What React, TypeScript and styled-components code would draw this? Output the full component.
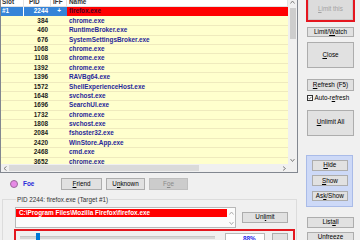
import React from "react";
import styled, { createGlobalStyle } from "styled-components";

const FONT = `"Liberation Sans", Arial, sans-serif`;

const GlobalStyle = createGlobalStyle`
  html, body {
    margin: 0;
    padding: 0;
    background: #f0f0f0;
  }
  body {
    width: 360px;
    height: 240px;
    overflow: hidden;
    font-family: ${FONT};
  }
`;

const Window = styled.div`
  display: flex;
  width: 360px;
  height: 243px;
  margin-top: -3px;
  overflow: hidden;
  background: #f0f0f0;
  font-family: ${FONT};
  color: #000;
`;

const LeftSide = styled.div`
  display: flex;
  flex-direction: column;
  width: 298px;
  flex: none;
`;

/* ---------- process list ---------- */

const ListFrame = styled.div`
  display: flex;
  flex-direction: column;
  height: 176px;
  flex: none;
  box-sizing: border-box;
  border: 1px solid #828790;
  background: #fff;
`;

const ListBody = styled.div`
  display: flex;
  flex: 1;
  min-height: 0;
`;

const Grid = styled.div`
  flex: 1;
  min-width: 0;
  overflow: hidden;
  background: #ffffcd;
`;

const HeaderRow = styled.div`
  display: flex;
  height: 9.4px;
  box-sizing: border-box;
  background: #fff;
  border-bottom: 1px solid #e3e3e3;
  font: bold 6.4px/8.4px ${FONT};
  color: #333;
`;

const HeaderCell = styled.div<{ $w?: number; $pad?: number }>`
  ${(p) => (p.$w ? `width: ${p.$w}px; flex: none;` : "flex: 1;")}
  box-sizing: border-box;
  padding-left: ${(p) => p.$pad ?? 1}px;
  border-right: 1px solid #e3e3e3;
  white-space: nowrap;
`;

const Row = styled.div<{ $sel?: boolean }>`
  display: flex;
  height: 9.4px;
  box-sizing: border-box;
  border-bottom: 1px solid ${(p) => (p.$sel ? "transparent" : "#efeabd")};
  font: bold 6.4px/8.4px ${FONT};
  white-space: nowrap;
`;

const SlotCell = styled.div<{ $sel?: boolean }>`
  width: 23px;
  flex: none;
  box-sizing: border-box;
  padding-left: 1px;
  background: ${(p) => (p.$sel ? "#3584d8" : "transparent")};
  border-right: 1.5px solid ${(p) => (p.$sel ? "#fff" : "transparent")};
  color: ${(p) => (p.$sel ? "#fff" : "#222")};
`;

const PidCell = styled.div<{ $sel?: boolean }>`
  width: 27px;
  flex: none;
  box-sizing: border-box;
  padding-right: 3px;
  text-align: right;
  background: ${(p) => (p.$sel ? "#3584d8" : "transparent")};
  color: ${(p) => (p.$sel ? "#fff" : "#1c1c1c")};
`;

const IffCell = styled.div<{ $sel?: boolean }>`
  width: 16px;
  flex: none;
  text-align: center;
  background: ${(p) => (p.$sel ? "#3584d8" : "transparent")};
  color: ${(p) => (p.$sel ? "#fff" : "#222")};
`;

const NameCell = styled.div<{ $sel?: boolean }>`
  flex: 1;
  padding-left: 2px;
  overflow: hidden;
  background: ${(p) => (p.$sel ? "#ff0000" : "transparent")};
  color: ${(p) => (p.$sel ? "#4a0024" : "#27279a")};
`;

const VScroll = styled.div`
  display: flex;
  flex-direction: column;
  width: 9px;
  flex: none;
  background: #f0f0f0;
`;

const ArrowBox = styled.div<{ $w: number; $h: number }>`
  display: flex;
  align-items: center;
  justify-content: center;
  width: ${(p) => p.$w}px;
  height: ${(p) => p.$h}px;
  flex: none;
`;

const VTrack = styled.div`
  flex: 1;
  display: flex;
  flex-direction: column;
  align-items: center;
  padding-top: 1px;
`;

const VThumb = styled.div`
  width: 6px;
  height: 31px;
  background: #cdcdcd;
`;

const HScroll = styled.div`
  display: flex;
  height: 8px;
  flex: none;
  background: #f0f0f0;
`;

const HTrack = styled.div`
  flex: 1;
  display: flex;
  align-items: center;
`;

const HThumb = styled.div`
  width: 190px;
  height: 6px;
  background: #dadada;
`;

const Corner = styled.div`
  width: 9px;
  flex: none;
  background: #f0f0f0;
`;

type Dir = "up" | "down" | "left" | "right";

const chevronPts: Record<Dir, string> = {
  up: "0.5,3.5 2.5,1 4.5,3.5",
  down: "0.5,1 2.5,3.5 4.5,1",
  left: "3.5,0.5 1,2.5 3.5,4.5",
  right: "1,0.5 3.5,2.5 1,4.5",
};

function Chevron({ dir, color = "#777" }: { dir: Dir; color?: string }) {
  const vertical = dir === "up" || dir === "down";
  return (
    <svg width={vertical ? 5 : 4.5} height={vertical ? 4.5 : 5} viewBox={vertical ? "0 0 5 4.5" : "0 0 4.5 5"}>
      <polyline points={chevronPts[dir]} fill="none" stroke={color} strokeWidth="0.9" />
    </svg>
  );
}

/* ---------- lower part ---------- */

const ColorRow = styled.div`
  display: flex;
  align-items: center;
  height: 12px;
  margin-top: 5px;
  padding-left: 10px;
`;

const Dot = styled.div<{ $color: string }>`
  width: 8px;
  height: 8px;
  flex: none;
  box-sizing: border-box;
  border-radius: 50%;
  border: 1px solid #9a6a9a;
  background: ${(p) => p.$color};
  margin-right: 5px;
`;

const IffLabel = styled.div`
  width: 38px;
  flex: none;
  font: bold 6.4px/1 ${FONT};
  color: #2a2ad8;
`;

const IffButtons = styled.div`
  display: flex;
  gap: 4px;
`;

const Btn = styled.button<{ $h?: number; $top?: number; $w?: number; $off?: boolean }>`
  display: flex;
  align-items: center;
  justify-content: center;
  box-sizing: border-box;
  width: ${(p) => (p.$w ? `${p.$w}px` : "100%")};
  height: ${(p) => p.$h ?? 11}px;
  margin: ${(p) => p.$top ?? 0}px 0 0 0;
  padding: 0;
  flex: none;
  border: 1px solid ${(p) => (p.$off ? "#bfbfbf" : "#adadad")};
  border-radius: 0;
  background: ${(p) => (p.$off ? "#cccccc" : "#e1e1e1")};
  color: ${(p) => (p.$off ? "#8a8a8a" : "#000")};
  font: 6.3px/1 ${FONT};
  white-space: nowrap;
`;

const TargetBtn = styled(Btn)`
  margin-left: -1px;
  border: 2px solid #e5161f;
  box-shadow: inset 0 0 0 1px #c9c9c9;
  background: #dcdcdc;
  color: #a3a3a3;
`;

const U = styled.span`
  text-decoration: underline;
  text-underline-offset: 0.5px;
`;

const TargetGroup = styled.fieldset`
  margin: 5.5px 0 0 2px;
  width: 295px;
  box-sizing: border-box;
  min-width: 0;
  padding: 4.5px 0 0 12px;
  border: 1px solid #dcdcdc;
  border-bottom: none;
`;

const GroupTitle = styled.legend`
  padding: 0 1px;
  margin-left: 1px;
  font: 6.3px/7px ${FONT};
  color: #333;
`;

const EditRow = styled.div`
  display: flex;
  align-items: center;
  height: 21px;
`;

const EditBox = styled.div`
  display: flex;
  width: 221px;
  height: 21px;
  flex: none;
  box-sizing: border-box;
  border: 1px solid #b8b8b8;
  background: #fbfbfb;
`;

const EditLines = styled.div`
  flex: 1;
  padding: 1px 0 0 0;
`;

const PathLine = styled.div`
  height: 8px;
  padding-left: 3px;
  background: #ff0000;
  color: #fff;
  font: bold 6.4px/8px ${FONT};
  white-space: nowrap;
  overflow: hidden;
`;

const EditScroll = styled.div`
  display: flex;
  flex-direction: column;
  justify-content: space-between;
  align-items: center;
  width: 8px;
  padding: 3px 0 2px;
  box-sizing: border-box;
`;

const LimitBox = styled.div`
  display: flex;
  align-items: flex-start;
  margin: 1px 0 0 -1px;
  width: 281px;
  height: 20px;
  box-sizing: border-box;
  border: 2px solid #e3171f;
  padding-top: 2px;
`;

const Slider = styled.div`
  position: relative;
  width: 195px;
  height: 12px;
  margin-left: 4px;
  flex: none;
`;

const SliderTrack = styled.div`
  margin-top: 2.5px;
  height: 2px;
  background: #d6d6d6;
  border-top: 1px solid #c6c6c6;
`;

const SliderThumb = styled.div`
  position: absolute;
  top: 0;
  width: 4px;
  height: 10px;
  background: #0078d7;
`;

const ValueBox = styled.div`
  width: 40px;
  height: 12px;
  margin-left: 10px;
  flex: none;
  box-sizing: border-box;
  border: 1px solid #b8b8b8;
  background: #fff;
  padding-left: 17px;
  font: bold 6.4px/10px ${FONT};
  color: #1f1fe8;
`;

/* ---------- right column ---------- */

const RightSide = styled.div`
  display: flex;
  flex-direction: column;
  width: 62px;
  flex: none;
  box-sizing: border-box;
  padding: 0 6px 0 9px;
`;

const CheckRow = styled.label`
  display: flex;
  align-items: center;
  height: 6.7px;
  margin-top: 4.3px;
  font: 6.3px/1 ${FONT};
  white-space: nowrap;
`;

const CheckBox = styled.span`
  display: flex;
  align-items: center;
  justify-content: center;
  width: 6px;
  height: 6px;
  margin-right: 1.5px;
  box-sizing: border-box;
  border: 1px solid #333;
  background: #fff;
`;

const WindowGroup = styled.div`
  display: flex;
  flex-direction: column;
  gap: 4.7px;
  width: 47px;
  margin: 19px 0 0 -1px;
  box-sizing: border-box;
  padding: 4.7px 4.3px 4.7px 5px;
  border: 1px solid #a9bbe8;
  background: #cdd9f7;
`;

const processes = [
  { pid: 2244, name: "firefox.exe", slot: "#1", iff: "+" },
  { pid: 384, name: "chrome.exe" },
  { pid: 460, name: "RuntimeBroker.exe" },
  { pid: 676, name: "SystemSettingsBroker.exe" },
  { pid: 1068, name: "chrome.exe" },
  { pid: 1108, name: "chrome.exe" },
  { pid: 1392, name: "chrome.exe" },
  { pid: 1396, name: "RAVBg64.exe" },
  { pid: 1572, name: "ShellExperienceHost.exe" },
  { pid: 1648, name: "svchost.exe" },
  { pid: 1696, name: "SearchUI.exe" },
  { pid: 1732, name: "chrome.exe" },
  { pid: 1808, name: "svchost.exe" },
  { pid: 2084, name: "fshoster32.exe" },
  { pid: 2420, name: "WinStore.App.exe" },
  { pid: 2468, name: "cmd.exe" },
  { pid: 3652, name: "chrome.exe" },
];

const limitPercent = 8.2;

export default function App() {
  return (
    <>
      <GlobalStyle />
      <Window>
        <LeftSide>
          <ListFrame>
            <ListBody>
              <Grid>
                <HeaderRow>
                  <HeaderCell $w={23}>Slot</HeaderCell>
                  <HeaderCell $w={27} $pad={5}>PID</HeaderCell>
                  <HeaderCell $w={16} $pad={2}>IFF</HeaderCell>
                  <HeaderCell $pad={2}>Name</HeaderCell>
                </HeaderRow>
                {processes.map((p) => {
                  const sel = !!p.slot;
                  return (
                    <Row key={p.pid} $sel={sel}>
                      <SlotCell $sel={sel}>{p.slot ?? ""}</SlotCell>
                      <PidCell $sel={sel}>{p.pid}</PidCell>
                      <IffCell $sel={sel}>{p.iff ?? ""}</IffCell>
                      <NameCell $sel={sel}>{p.name}</NameCell>
                    </Row>
                  );
                })}
              </Grid>
              <VScroll>
                <ArrowBox $w={9} $h={9}>
                  <Chevron dir="up" />
                </ArrowBox>
                <VTrack>
                  <VThumb />
                </VTrack>
                <ArrowBox $w={9} $h={8}>
                  <Chevron dir="down" />
                </ArrowBox>
              </VScroll>
            </ListBody>
            <HScroll>
              <ArrowBox $w={8} $h={8}>
                <Chevron dir="left" />
              </ArrowBox>
              <HTrack>
                <HThumb />
              </HTrack>
              <ArrowBox $w={8} $h={8}>
                <Chevron dir="right" />
              </ArrowBox>
              <Corner />
            </HScroll>
          </ListFrame>

          <ColorRow>
            <Dot $color="#e78ae6" />
            <IffLabel>Foe</IffLabel>
            <IffButtons>
              <Btn $w={41} $h={12}>
                <U>F</U>riend
              </Btn>
              <Btn $w={39} $h={12}>
                U<U>n</U>known
              </Btn>
              <Btn $w={39} $h={12} $off>
                F<U>o</U>e
              </Btn>
            </IffButtons>
          </ColorRow>

          <TargetGroup>
            <GroupTitle>PID 2244: firefox.exe (Target #1)</GroupTitle>
            <EditRow>
              <EditBox>
                <EditLines>
                  <PathLine>C:\Program Files\Mozilla Firefox\firefox.exe</PathLine>
                </EditLines>
                <EditScroll>
                  <Chevron dir="up" color="#a8a8a8" />
                  <Chevron dir="down" color="#a8a8a8" />
                </EditScroll>
              </EditBox>
              <Btn $w={46} $h={10.5} style={{ marginLeft: 6 }}>
                Unl<U>i</U>mit
              </Btn>
            </EditRow>
            <LimitBox>
              <Slider>
                <SliderTrack />
                <SliderThumb style={{ left: `${limitPercent}%` }} />
              </Slider>
              <ValueBox>88%</ValueBox>
              <Btn $w={16} $h={12} style={{ marginLeft: 7 }} />
            </LimitBox>
          </TargetGroup>
        </LeftSide>

        <RightSide>
          <TargetBtn $w={49} $h={25} $off>
            <U>L</U>imit this
          </TargetBtn>
          <Btn $top={4.7} $h={10.6}>
            Limit/<U>W</U>atch
          </Btn>
          <Btn $top={5} $h={25.4}>
            <U>C</U>lose
          </Btn>
          <Btn $top={11.3} $h={11.7}>
            <U>R</U>efresh (F5)
          </Btn>
          <CheckRow>
            <CheckBox>
              <svg width="5" height="4" viewBox="0 0 5 4">
                <polyline points="0.5,2 1.8,3.3 4.5,0.5" fill="none" stroke="#222" strokeWidth="0.9" />
              </svg>
            </CheckBox>
            Auto-r<U>e</U>fresh
          </CheckRow>
          <Btn $top={8.3} $h={26}>
            <U>U</U>nlimit All
          </Btn>
          <WindowGroup>
            <Btn $h={10.5}>
              <U>H</U>ide
            </Btn>
            <Btn $h={10.5}>
              <U>S</U>how
            </Btn>
            <Btn $h={10.5}>
              As<U>k</U>/Show
            </Btn>
          </WindowGroup>
          <Btn $top={10} $h={11.4}>
            List <U>a</U>ll
          </Btn>
          <Btn $top={3.6} $h={11}>
            Unfreeze
          </Btn>
        </RightSide>
      </Window>
    </>
  );
}
